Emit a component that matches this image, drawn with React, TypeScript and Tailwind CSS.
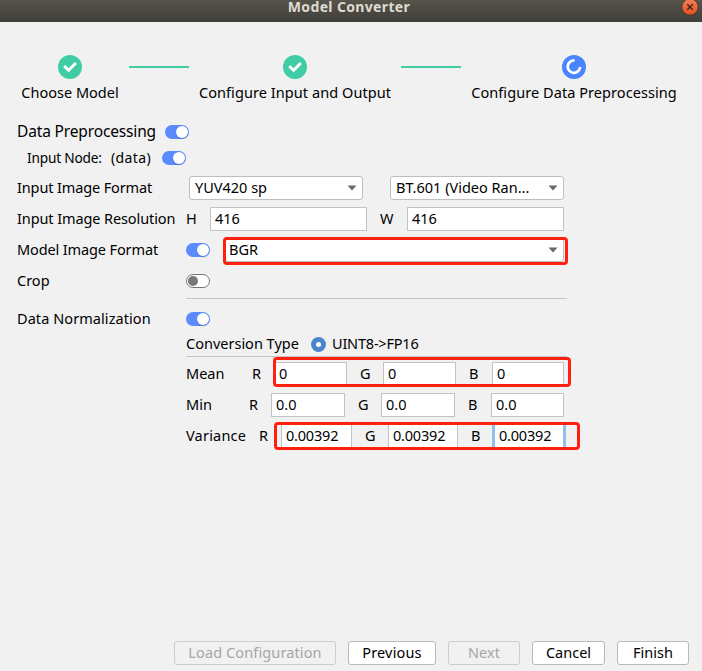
import React from "react";

type TextProps = { className?: string; children: React.ReactNode };

const Label = ({ className = "", children }: TextProps) => (
  <span className={`shrink-0 pb-[2px] whitespace-pre ${className}`}>{children}</span>
);

const Toggle = ({ on = true, className = "" }: { on?: boolean; className?: string }) => (
  <span
    className={`flex h-[14px] w-6 shrink-0 items-center rounded-full ${
      on ? "justify-end bg-[#5b8cff] pr-px" : "justify-start border border-[#777777] bg-white pl-px"
    } ${className}`}
  >
    <span
      className={
        on
          ? "size-[12px] rounded-full bg-white shadow-[0_1px_2px_rgba(0,0,0,0.18)]"
          : "size-[10px] rounded-full bg-[#777777]"
      }
    />
  </span>
);

const Field = ({ className = "", children }: TextProps) => (
  <span className={`flex h-6 shrink-0 items-center whitespace-pre border border-[#c3c3c3] bg-white pb-[2px] ${className}`}>
    {children}
  </span>
);

const Select = ({ className = "", children }: TextProps) => (
  <span
    className={`flex h-6 shrink-0 items-center justify-between whitespace-pre rounded-[3px] border border-[#bebebe] bg-white pr-[5px] pl-[5px] ${className}`}
  >
    <span className="pb-[2px]">{children}</span>
    <svg width="10" height="6" viewBox="0 0 10 6">
      <path d="M0.5 0.5h9L5 5.5z" fill="#696969" />
    </svg>
  </span>
);

const Marker = ({ className = "" }: { className?: string }) => (
  <span className={`pointer-events-none absolute rounded-[4px] border-3 border-[#ff2010] ${className}`} />
);

const Row = ({ className = "", children }: TextProps) => (
  <div className={`relative flex h-6 items-center ${className}`}>{children}</div>
);

const Done = () => (
  <svg width="24" height="24" viewBox="0 0 24 24">
    <circle cx="12" cy="12" r="12" fill="#40cda6" />
    <path d="M6.2 11.1l4.4 4.2 7.3-7.4" fill="none" stroke="#fff" strokeWidth="2.9" />
  </svg>
);

const Active = () => (
  <svg width="24" height="24" viewBox="0 0 24 24">
    <circle cx="12" cy="12" r="12" fill="#4a85ff" />
    <path d="M12.6 5.5A6.2 6.2 0 1 0 18.1 12" fill="none" stroke="#fff" strokeWidth="2.7" />
  </svg>
);

const Step = ({ icon, className = "", children }: TextProps & { icon: React.ReactNode }) => (
  <div className={`flex shrink-0 flex-col items-center ${className}`}>
    {icon}
    <span className="mt-[2px] h-[22px] whitespace-pre leading-[22px]">{children}</span>
  </div>
);

const Button = ({ disabled = false, className = "", children }: TextProps & { disabled?: boolean }) => (
  <button
    disabled={disabled}
    className={`h-6 shrink-0 whitespace-pre rounded-[3px] border pb-[2px] leading-[20px] ${
      disabled ? "border-[#cccccc] text-[#a6a6a6]" : "border-[#b9b9b9] bg-white"
    } ${className}`}
  >
    {children}
  </button>
);

export default function App() {
  return (
    <div className="flex h-[671px] w-[702px] flex-col overflow-hidden bg-[#f1f1f1] font-['Noto_Sans','Open_Sans',sans-serif] text-[14.5px] leading-[22px] text-black">
      <header className="relative flex h-[22px] shrink-0 justify-center bg-linear-to-b from-[#57544b] to-[#3f3e39] pr-[4px]">
        <h1 className="h-[14px] text-[14px] leading-[14px] font-bold tracking-[0.35px] whitespace-pre text-[#dfdbd2]">Model Converter</h1>
        <svg className="absolute -top-px left-[681px]" width="18" height="18" viewBox="0 0 18 18">
          <defs>
            <linearGradient id="close" x1="0" y1="0" x2="0" y2="1">
              <stop offset="0" stopColor="#f58058" />
              <stop offset="1" stopColor="#e34e20" />
            </linearGradient>
          </defs>
          <circle cx="9" cy="8" r="8.2" fill="url(#close)" stroke="#34332e" strokeWidth="0.8" />
          <path d="M6.2 5.2l5.6 5.6M11.8 5.2l-5.6 5.6" stroke="#3c2b22" strokeWidth="1.5" />
        </svg>
      </header>

      <nav className="flex h-[95px] shrink-0 pt-[33px]">
        <Step icon={<Done />} className="ml-[15px] w-[110px]">Choose Model</Step>
        <span className="mt-[11px] ml-[4px] h-[2px] w-[60px] shrink-0 bg-[#40cda6]" />
        <Step icon={<Done />} className="w-[212px] tracking-[0.07px]">Configure Input and Output</Step>
        <span className="mt-[11px] h-[2px] w-[60px] shrink-0 bg-[#40cda6]" />
        <Step icon={<Active />} className="w-[226px] tracking-[0.07px]">Configure Data Preprocessing</Step>
      </nav>

      <main className="flex flex-1 flex-col pl-[17px]">
        <Row className="mt-[3px]">
          <Label className="w-[148px] pb-[3px] text-[15.5px] tracking-[-0.15px]">Data Preprocessing</Label>
          <Toggle />
        </Row>
        <Row className="mt-[2px] pl-[10px]">
          <Label className="w-[84px] pb-px text-[13.7px] tracking-[-0.2px]">Input Node:</Label>
          <Label className="w-[51px] pb-px text-[14px] tracking-[0.4px]">(data)</Label>
          <Toggle />
        </Row>
        <Row className="mt-[6px]">
          <Label className="w-[172px] tracking-[-0.13px]">Input Image Format</Label>
          <Select className="w-[174px]">YUV420 sp</Select>
          <Select className="ml-[27px] w-[174px]">BT.601 (Video Ran...</Select>
        </Row>
        <Row className="mt-[7px]">
          <Label className="w-[169px] tracking-[-0.1px]">Input Image Resolution</Label>
          <Label className="w-[24px]">H</Label>
          <Field className="w-[157px] pl-[4px]">416</Field>
          <Label className="ml-[13px] w-[27px]">W</Label>
          <Field className="w-[157px] pl-[4px]">416</Field>
        </Row>
        <Row className="mt-[7px]">
          <Label className="w-[169px] tracking-[-0.12px]">Model Image Format</Label>
          <Toggle />
          <Select className="ml-[13px] w-[341px]">BGR</Select>
          <Marker className="-top-px left-[206px] h-[28px] w-[345px]" />
        </Row>
        <Row className="mt-[7px]">
          <Label className="w-[169px]">Crop</Label>
          <Toggle on={false} />
        </Row>
        <hr className="mt-[5px] ml-[169px] w-[381px] border-[#c6c6c6]" />
        <Row className="mt-[8px]">
          <Label className="w-[169px] tracking-[0.07px]">Data Normalization</Label>
          <Toggle />
        </Row>

        <section className="flex flex-col pl-[169px]">
          <Row className="mt-px">
            <Label className="w-[125px]">Conversion Type</Label>
            <span className="flex size-[15px] items-center justify-center rounded-full bg-[#4a86cb]">
              <span className="size-[5px] rounded-full bg-white" />
            </span>
            <Label className="ml-[6px] tracking-[-0.2px]">{"UINT8->FP16"}</Label>
          </Row>
          <hr className="w-[381px] border-[#c6c6c6]" />
          <Row className="mt-[5px]">
            <Label className="w-[66px]">Mean</Label>
            <Label className="w-[22px]">R</Label>
            <Field className="w-[73px] pl-[4px]">0</Field>
            <Label className="ml-[13px] w-[23px]">G</Label>
            <Field className="w-[73px] pl-[4px]">0</Field>
            <Label className="ml-[13px] w-[23px]">B</Label>
            <Field className="w-[72px] pl-[4px]">0</Field>
            <Marker className="-top-[5px] left-[87px] h-[30px] w-[298px]" />
          </Row>
          <Row className="mt-[7px]">
            <Label className="w-[63px]">Min</Label>
            <Label className="w-[22px]">R</Label>
            <Field className="w-[74px] pl-[4px]">0.0</Field>
            <Label className="ml-[13px] w-[23px]">G</Label>
            <Field className="w-[74px] pl-[4px]">0.0</Field>
            <Label className="ml-[13px] w-[23px]">B</Label>
            <Field className="w-[73px] pl-[4px]">0.0</Field>
          </Row>
          <Row className="mt-[7px]">
            <Label className="w-[73px] tracking-[0.2px]">Variance</Label>
            <Label className="w-[22px]">R</Label>
            <Field className="w-[71px] pl-[4px] tracking-[-0.2px]">0.00392</Field>
            <Label className="ml-[13px] w-[23px]">G</Label>
            <Field className="w-[70px] pl-[4px] tracking-[-0.2px]">0.00392</Field>
            <Label className="ml-[13px] w-[21px]">B</Label>
            <Field className="w-[74px] border-x-3 border-x-[#92bfef] pl-[4px] tracking-[-0.2px]">0.00392</Field>
            <Marker className="-top-[2px] left-[88px] h-[28px] w-[306px]" />
          </Row>
        </section>
      </main>

      <footer className="flex h-[30px] shrink-0 gap-3 pl-[174px]">
        <Button disabled className="w-[162px] tracking-[0.12px]">Load Configuration</Button>
        <Button className="w-[88px] tracking-[0.15px]">Previous</Button>
        <Button disabled className="w-[72px]">Next</Button>
        <Button className="w-[73px]">Cancel</Button>
        <Button className="w-[72px]">Finish</Button>
      </footer>
    </div>
  );
}
